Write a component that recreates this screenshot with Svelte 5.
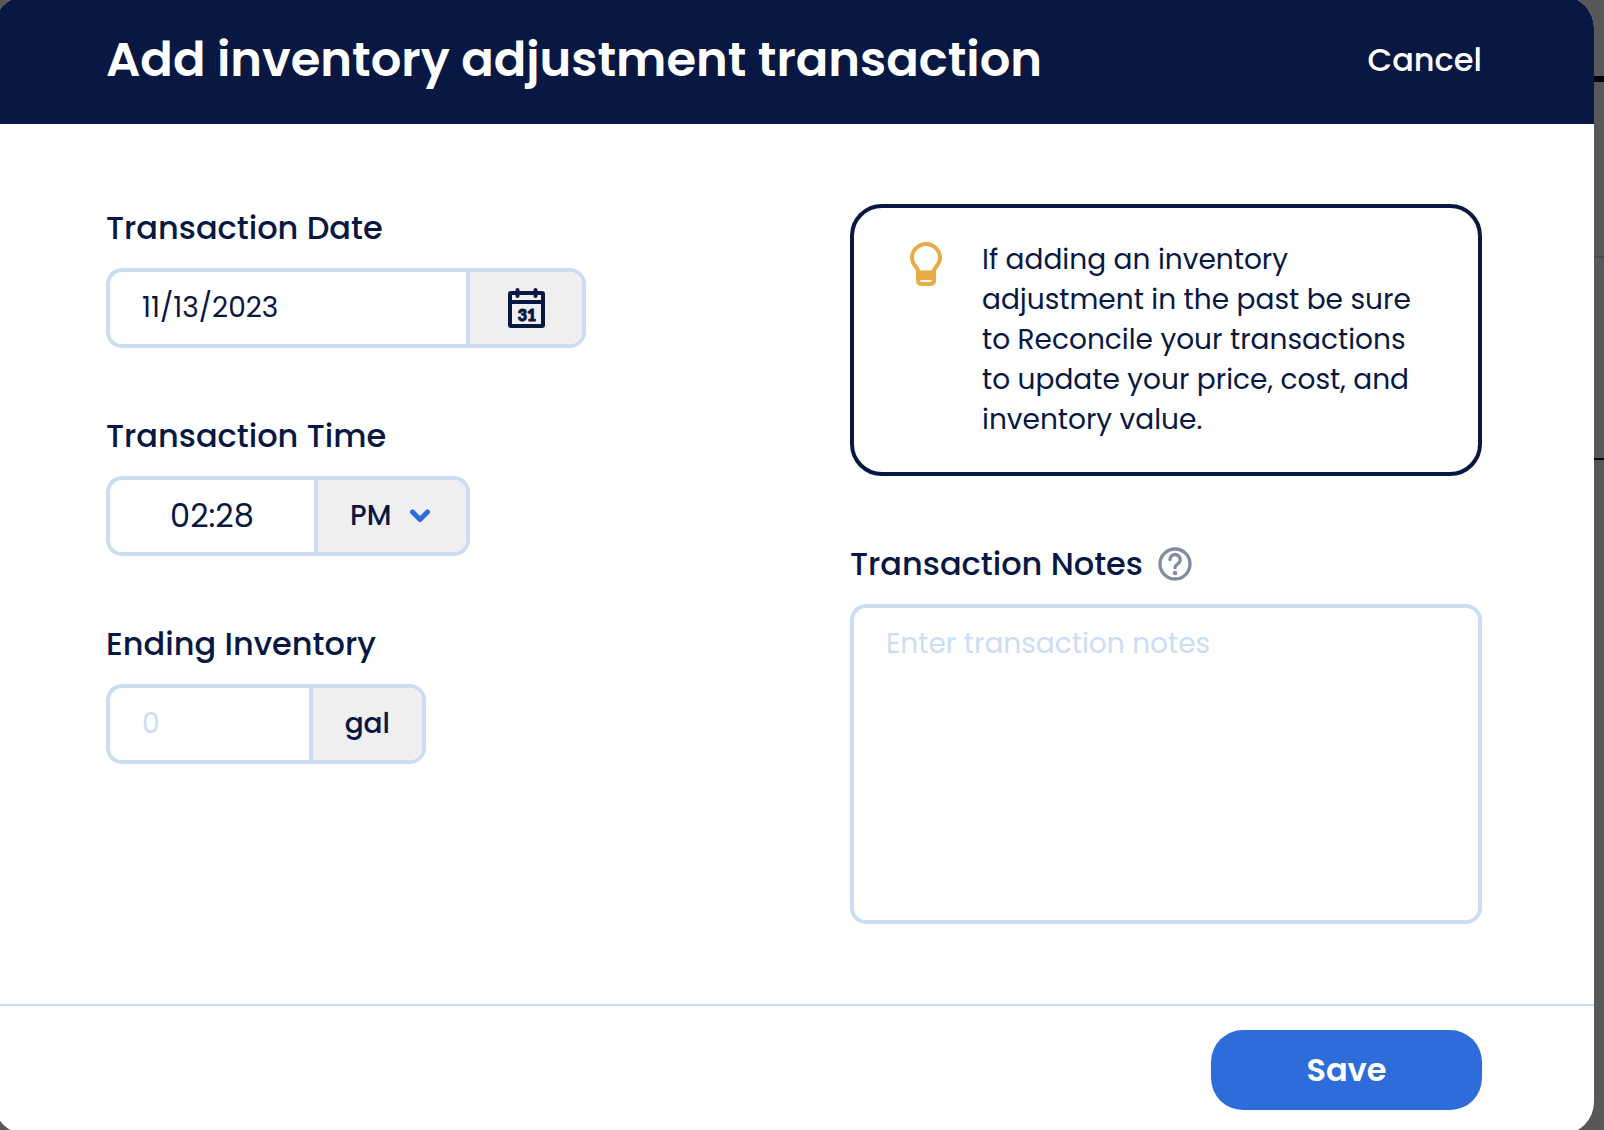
<script>
  let date = '11/13/2023';
  let time = '02:28';
  let period = 'PM';
  let inventory = '';
  let notes = '';
</script>

<div class="page">
  <div class="page-nav"></div>
  <div class="page-row"></div>
  <div class="page-row dark"></div>
</div>

<form class="modal" on:submit|preventDefault>
  <header>
    <h1>Add inventory adjustment transaction</h1>
    <button type="button" class="cancel">Cancel</button>
  </header>

  <div class="content">
    <div class="column">
      <div class="field">
        <label for="date">Transaction Date</label>
        <div class="group date">
          <input id="date" type="text" bind:value={date} />
          <button type="button" class="addon" aria-label="Open calendar">
            <svg width="48" height="48" viewBox="0 0 48 48">
              <rect x="8" y="9" width="33" height="33" rx="1" fill="none" stroke="currentColor" stroke-width="4" />
              <path
                d="M8 18H41M15.500 6V12M33.500 6V12"
                fill="none"
                stroke="currentColor"
                stroke-width="4"
                stroke-linecap="round"
              />
              <text x="25" y="37" text-anchor="middle">31</text>
            </svg>
          </button>
        </div>
      </div>

      <div class="field">
        <label for="time">Transaction Time</label>
        <div class="group time">
          <input id="time" type="text" bind:value={time} />
          <div class="addon period">
            <select aria-label="AM or PM" bind:value={period}>
              <option>AM</option>
              <option>PM</option>
            </select>
            <svg class="chevron" width="20" height="14" viewBox="0 0 20 14">
              <path
                d="M2.500 3 10 10.500 17.500 3"
                fill="none"
                stroke="currentColor"
                stroke-width="5"
                stroke-linecap="round"
                stroke-linejoin="round"
              />
            </svg>
          </div>
        </div>
      </div>

      <div class="field">
        <label for="inventory">Ending Inventory</label>
        <div class="group inventory">
          <input id="inventory" type="text" placeholder="0" bind:value={inventory} />
          <span class="addon unit">gal</span>
        </div>
      </div>
    </div>

    <div class="column">
      <div class="callout">
        <svg width="48" height="48" viewBox="0 0 24 24">
          <path
            d="M8.200 17V15.700C8.200 13.800 5 12.600 5 9A7 7 0 0 1 19 9C19 12.600 15.800 13.800 15.800 15.700V17"
            fill="none"
            stroke="currentColor"
            stroke-width="2"
          />
          <path
            d="M7 15.200H17V20.500A2.500 2.500 0 0 1 14.500 23H9.500A2.500 2.500 0 0 1 7 20.500ZM9 20Q9 21 10 21H14Q15 21 15 20Z"
            fill="currentColor"
            fill-rule="evenodd"
          />
        </svg>
        <p>
          If adding an inventory adjustment in the past be sure to Reconcile your transactions to
          update your price, cost, and inventory value.
        </p>
      </div>

      <div class="field notes">
        <div class="label-row">
          <label for="notes">Transaction Notes</label>
          <button type="button" class="help" aria-label="Help">
            <svg width="40" height="40" viewBox="0 0 24 24">
              <g fill="none" stroke="currentColor" stroke-width="2" stroke-linecap="round">
                <circle cx="12" cy="12" r="9" />
                <path d="M9 9.300A3.050 3.050 0 1 1 14.100 11.600C13 12.500 12 12.900 12 14.200" />
              </g>
              <circle cx="12" cy="17.400" r="1.400" fill="currentColor" />
            </svg>
          </button>
        </div>
        <textarea id="notes" placeholder="Enter transaction notes" bind:value={notes}></textarea>
      </div>
    </div>
  </div>

  <footer>
    <button type="submit" class="save">Save</button>
  </footer>
</form>

<style>
  :global(body) {
    --navy: #081842;
    --blue: #2e6dd9;
    --border: #ccddf3;
    --surface: #efefef;
    background: #585858;
    overflow: hidden;
  }

  .page,
  .page *,
  .modal,
  .modal * {
    box-sizing: border-box;
  }

  .page {
    position: absolute;
    inset: 0;
    z-index: -1;
  }

  .page-nav {
    height: 82px;
    border-bottom: 6px solid #020611;
  }

  .page-row {
    height: 176px;
    border-bottom: 2px solid #474d58;
  }

  .page-row.dark {
    height: 202px;
    border-bottom-color: #030818;
  }

  .modal {
    margin: -4px 10px -4px -6px;
    border-radius: 32px;
    overflow: hidden;
    background: #fff;
    color: var(--navy);
    font-family: Poppins, Inter, 'Open Sans', sans-serif;
    font-size: 28px;
    line-height: 40px;
  }

  button,
  input,
  select,
  textarea {
    margin: 0;
    padding: 0;
    border: 0;
    background: none;
    color: inherit;
    font: inherit;
    outline: none;
  }

  svg {
    display: block;
    flex: none;
  }

  header {
    display: flex;
    align-items: center;
    justify-content: space-between;
    height: 128px;
    padding: 0 112px;
    background: var(--navy);
    color: #fff;
  }

  h1 {
    margin: 0;
    font-size: 48px;
    line-height: 64px;
    font-weight: 600;
  }

  .cancel {
    font-size: 32px;
    font-weight: 500;
  }

  .content {
    display: grid;
    grid-template-columns: 1fr 1fr;
    gap: 112px;
    padding: 80px 112px;
  }

  .column {
    display: flex;
    flex-direction: column;
    gap: 64px;
  }

  .field {
    display: flex;
    flex-direction: column;
    gap: 16px;
  }

  label {
    font-size: 32px;
    line-height: 48px;
    font-weight: 500;
  }

  .group {
    display: flex;
    height: 80px;
    border: 4px solid var(--border);
    border-radius: 16px;
    overflow: hidden;
  }

  .group input {
    flex: 1;
    min-width: 0;
    padding: 0 32px;
  }

  .date {
    width: 480px;
  }

  .time {
    width: 364px;
  }

  .inventory {
    width: 320px;
  }

  .time input {
    font-size: 32px;
    text-align: center;
  }

  .addon {
    display: flex;
    align-items: center;
    justify-content: center;
    width: 116px;
    border-left: 4px solid var(--border);
    background: var(--surface);
    font-weight: 500;
  }

  .addon text {
    font-family: Lato, sans-serif;
    font-size: 16px;
    font-weight: 900;
    fill: currentColor;
    stroke: currentColor;
    stroke-width: 1px;
    stroke-linejoin: round;
  }

  .addon.unit {
    width: auto;
    padding: 0 32px;
  }

  .addon.period {
    position: relative;
    width: 152px;
  }

  .period select {
    width: 100%;
    height: 100%;
    padding-left: 32px;
    appearance: none;
  }

  .chevron {
    position: absolute;
    right: 36px;
    color: var(--blue);
    pointer-events: none;
  }

  ::placeholder {
    color: var(--border);
    opacity: 1;
  }

  .callout {
    display: flex;
    gap: 32px;
    padding: 32px 48px;
    border: 4px solid var(--navy);
    border-radius: 32px;
  }

  .callout svg {
    color: #eaab46;
  }

  .callout p {
    margin: 0;
  }

  .label-row {
    display: flex;
    align-items: center;
    gap: 12px;
  }

  .help {
    color: #838ba1;
  }

  textarea {
    height: 320px;
    padding: 16px 32px;
    border: 4px solid var(--border);
    border-radius: 16px;
    resize: none;
  }

  footer {
    display: flex;
    justify-content: flex-end;
    padding: 24px 112px;
    border-top: 2px solid var(--border);
  }

  .save {
    height: 80px;
    min-width: 271px;
    border-radius: 32px;
    background: var(--blue);
    color: #fff;
    font-size: 32px;
    font-weight: 600;
  }
</style>
